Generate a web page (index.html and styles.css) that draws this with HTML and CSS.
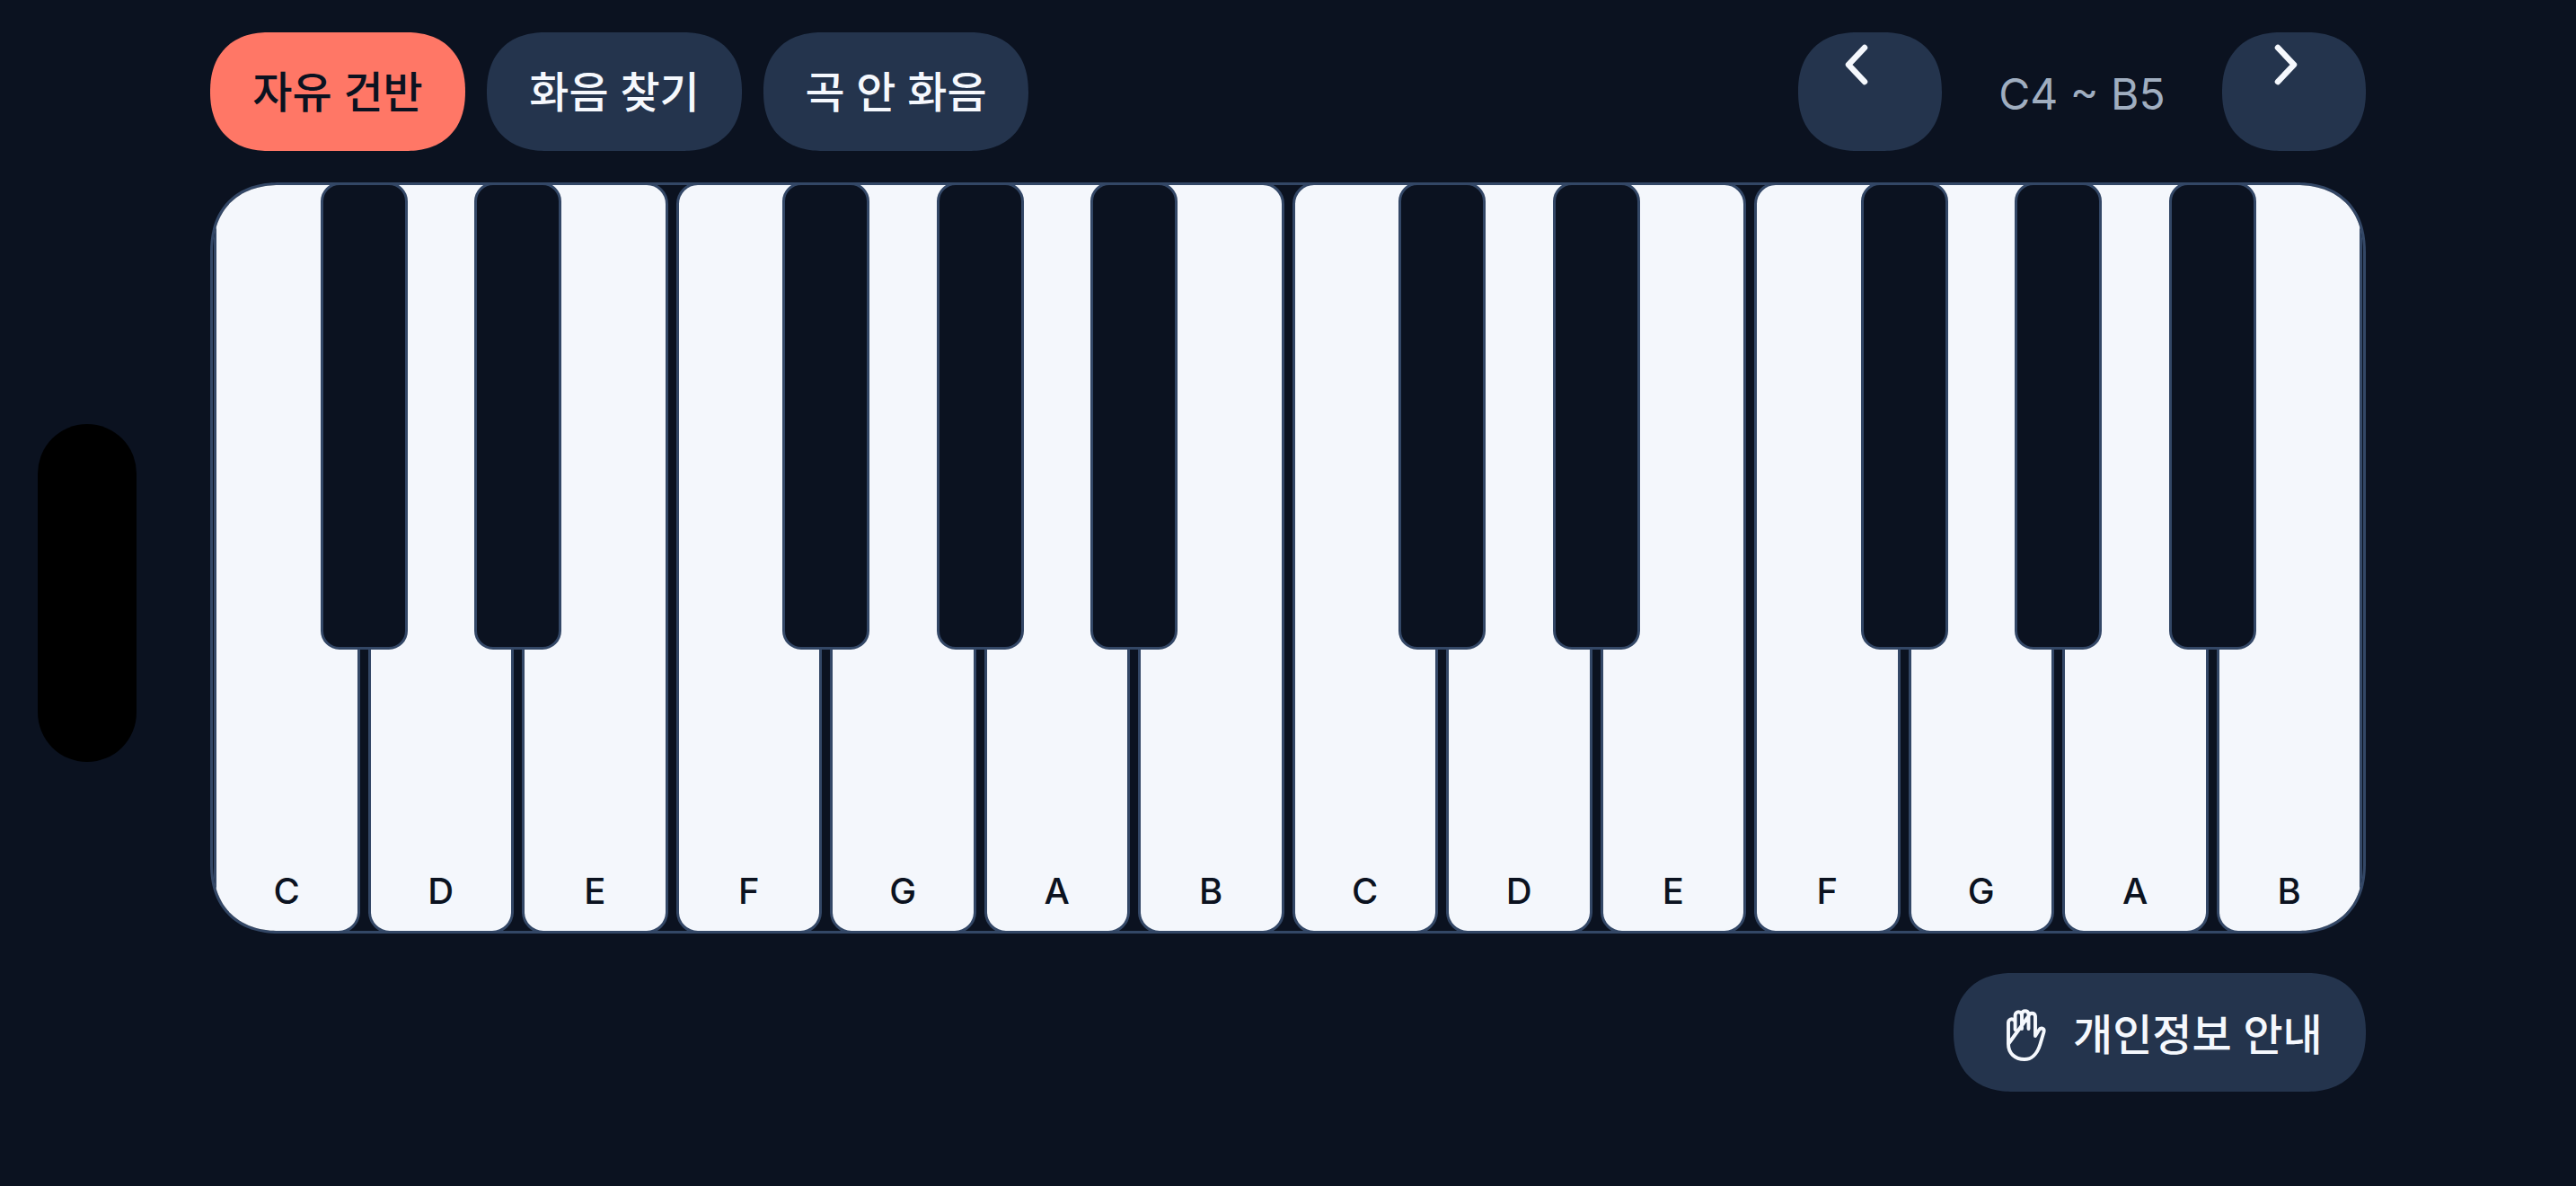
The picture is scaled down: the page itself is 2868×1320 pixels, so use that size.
FILE: index.html
```html
<!DOCTYPE html>
<html lang="ko">
<head>
<meta charset="utf-8">
<title>Piano</title>
<link rel="stylesheet" href="styles.css">
</head>
<body>
<div class="island"></div>
<main class="app">
  <header class="toolbar">
    <nav class="tabs">
      <button class="btn tab active">자유 건반</button>
      <button class="btn tab">화음 찾기</button>
      <button class="btn tab wide">곡 안 화음</button>
    </nav>
    <div class="range">
      <button class="btn nav prev" aria-label="이전"><svg class="chev" viewBox="0 0 40 60"><path d="M26 11L8 30L26 49"/></svg></button>
      <span class="range-label">C4 ~ B5</span>
      <button class="btn nav next" aria-label="다음"><svg class="chev" viewBox="0 0 40 60"><path d="M6 11L24 30L6 49"/></svg></button>
    </div>
  </header>
  <section class="piano">
    <div class="key"><span class="label">C</span><i class="black"></i></div>
    <div class="key"><span class="label">D</span><i class="black"></i></div>
    <div class="key"><span class="label">E</span></div>
    <div class="key"><span class="label">F</span><i class="black"></i></div>
    <div class="key"><span class="label">G</span><i class="black"></i></div>
    <div class="key"><span class="label">A</span><i class="black"></i></div>
    <div class="key"><span class="label">B</span></div>
    <div class="key"><span class="label">C</span><i class="black"></i></div>
    <div class="key"><span class="label">D</span><i class="black"></i></div>
    <div class="key"><span class="label">E</span></div>
    <div class="key"><span class="label">F</span><i class="black"></i></div>
    <div class="key"><span class="label">G</span><i class="black"></i></div>
    <div class="key"><span class="label">A</span><i class="black"></i></div>
    <div class="key"><span class="label">B</span></div>
  </section>
  <footer class="footer">
    <button class="btn privacy">
      <svg class="hand" viewBox="0 0 64 72"><path d="M11 50V26A3.8 3.8 0 0 1 18.6 26V34M18.6 26V18A3.7 3.7 0 0 1 26 18V33M26 18V16.5A3.8 3.8 0 0 1 33.5 16.5V33M33.5 19A3.8 3.8 0 0 1 41 19V41L45 34.5C47 31 51.5 32.5 50.5 36.5L46.5 50C43 62 36 67 29 67C18 67 11 60 11 50Z"/></svg>
      <span>개인정보 안내</span>
    </button>
  </footer>
</main>
</body>
</html>
```
FILE: styles.css
```css
* { box-sizing: border-box; }
html, body { margin: 0; height: 100%; }
body {
  background: #0b1220;
  font-family: Inter, "Noto Sans CJK KR", "Noto Sans", sans-serif;
  color: #f5f8fd;
  overflow: hidden;
}
.island {
  position: absolute;
  left: 42px;
  top: 472px;
  width: 110px;
  height: 376px;
  border-radius: 55px;
  background: #000;
}
.app {
  display: flex;
  flex-direction: column;
  padding: 36px 234px 0;
}
.toolbar {
  display: flex;
  justify-content: space-between;
  height: 132px;
}
.tabs, .range { display: flex; }
.tabs { gap: 24px; }
.btn {
  display: flex;
  align-items: center;
  justify-content: center;
  height: 132px;
  padding: 0;
  border: 0;
  border-radius: 66px;
  corner-shape: superellipse(1.2);
  background: #24344d;
  color: #f5f8fd;
  font-family: inherit;
  font-size: 48px;
  font-weight: 500;
}
.tab { width: 284px; padding-bottom: 6px; }
.tab.wide { width: 295px; }
.tab.active { background: #ff7766; color: #0b1220; }
.nav {
  width: 160px;
  align-items: flex-start;
  justify-content: flex-start;
  padding-top: 6px;
}
.prev { padding-left: 48px; }
.next { padding-left: 56px; }
.chev {
  width: 40px;
  height: 60px;
  fill: none;
  stroke: #f5f8fd;
  stroke-width: 6.5;
  stroke-linecap: round;
  stroke-linejoin: round;
}
.range-label {
  width: 312px;
  padding-top: 3px;
  text-align: center;
  line-height: 132px;
  font-size: 48px;
  font-weight: 400;
  color: #a0aec0;
}
.piano {
  display: flex;
  gap: 9px;
  height: 836px;
  margin-top: 35px;
  padding: 0 1px;
  border: 3px solid #334766;
  border-radius: 78px;
  corner-shape: superellipse(1.2);
  overflow: hidden;
}
.key {
  position: relative;
  flex: 1;
  display: flex;
  align-items: flex-end;
  justify-content: center;
  margin: -3px 0;
  padding-bottom: 20px;
  border: 3px solid #334766;
  border-radius: 24px;
  background: #f4f7fc;
  color: #0b1220;
  font-size: 40px;
  font-weight: 500;
  line-height: 48px;
}
.black {
  position: absolute;
  z-index: 1;
  top: -3px;
  right: -56px;
  width: 97px;
  height: 520px;
  border: 3px solid #334766;
  border-radius: 21px;
  background: #0b1220;
}
.footer {
  display: flex;
  justify-content: flex-end;
  margin-top: 44px;
}
.privacy {
  width: 459px;
  justify-content: flex-start;
  gap: 19px;
  padding: 0 0 3px 50px;
}
.hand {
  width: 64px;
  height: 72px;
  fill: none;
  stroke: #f5f8fd;
  stroke-width: 3.9;
  stroke-linecap: round;
  stroke-linejoin: round;
}
```
